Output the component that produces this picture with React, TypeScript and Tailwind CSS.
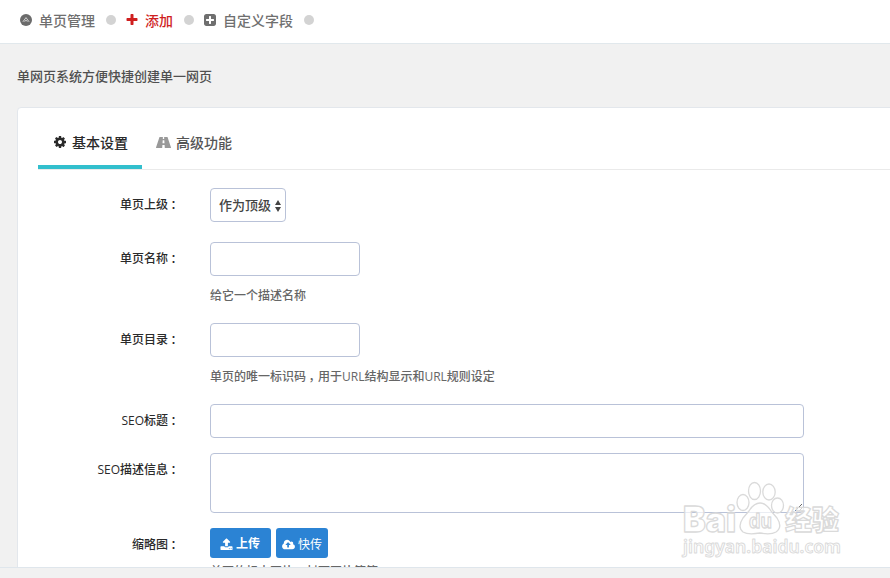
import type { ReactNode } from 'react';

const COG_PATH = 'M1152 896q0-106-75-181t-181-75-181 75-75 181 75 181 181 75 181-75 75-181zm512-109v222q0 12-8 23t-20 13l-185 28q-19 54-39 91 35 50 107 138 10 12 10 25t-9 23q-27 37-99 108t-94 71q-12 0-26-9l-138-108q-44 23-91 38-16 136-29 186-7 28-36 28h-222q-14 0-24.5-8.5t-11.5-21.5l-28-184q-49-16-90-37l-141 107q-10 9-25 9-14 0-25-11-126-114-165-168-7-10-7-23 0-12 8-23 15-21 51-66.5t54-70.5q-27-50-41-99l-183-27q-13-2-21-12.5t-8-23.5v-222q0-12 8-23t19-13l186-28q14-46 39-92-40-57-107-138-10-12-10-24 0-10 9-23 26-36 98.5-107.5t94.5-71.5q13 0 26 10l138 107q44-23 91-38 16-136 29-186 7-28 36-28h222q14 0 24.5 8.5t11.5 21.5l28 184q49 16 90 37l142-107q9-9 24-9 13 0 25 10 129 119 165 170 7 8 7 22 0 12-8 23-15 21-51 66.5t-54 70.5q26 50 41 98l183 28q13 2 21 12.5t8 23.5z';
const PLUS_PATH = 'M1600 736v192q0 40-28 68t-68 28h-416v416q0 40-28 68t-68 28h-192q-40 0-68-28t-28-68v-416h-416q-40 0-68-28t-28-68v-192q0-40 28-68t68-28h416v-416q0-40 28-68t68-28h192q40 0 68 28t28 68v416h416q40 0 68 28t28 68z';
const PLUS_SQUARE_PATH = 'M1408 960v-128q0-26-19-45t-45-19h-320v-320q0-26-19-45t-45-19h-128q-26 0-45 19t-19 45v320h-320q-26 0-45 19t-19 45v128q0 26 19 45t45 19h320v320q0 26 19 45t45 19h128q26 0 45-19t19-45v-320h320q26 0 45-19t19-45zm256-544v960q0 119-84.5 203.5t-203.5 84.5h-960q-119 0-203.5-84.5t-84.5-203.5v-960q0-119 84.5-203.5t203.5-84.5h960q119 0 203.5 84.5t84.5 203.5z';
const UPLOAD_PATH = 'M1344 1472q0-26-19-45t-45-19-45 19-19 45 19 45 45 19 45-19 19-45zm256 0q0-26-19-45t-45-19-45 19-19 45 19 45 45 19 45-19 19-45zm128-224v320q0 40-28 68t-68 28h-1472q-40 0-68-28t-28-68v-320q0-40 28-68t68-28h427q21 56 70.5 92t110.5 36h256q61 0 110.5-36t70.5-92h427q40 0 68 28t28 68zm-325-648q-17 40-59 40h-256v448q0 26-19 45t-45 19h-256q-26 0-45-19t-19-45v-448h-256q-42 0-59-40-17-39 14-69l448-448q18-19 45-19t45 19l448 448q31 30 14 69z';
const CLOUD_PATH = 'M1280 864q0-14-9-23l-352-352q-9-9-23-9t-23 9l-351 351q-10 12-10 24 0 14 9 23t23 9h224v352q0 13 9.5 22.5t22.5 9.5h192q13 0 22.5-9.5t9.5-22.5v-352h224q13 0 22.5-9.5t9.5-22.5zm640 288q0 159-112.5 271.5t-271.5 112.5h-1088q-185 0-316.5-131.5t-131.5-316.5q0-130 70-240t188-165q-2-30-2-43 0-212 150-362t362-150q156 0 285.5 87t188.5 231q71-62 166-62 106 0 181 75t75 181q0 76-41 138 130 31 213.5 135.5t83.5 238.5z';

type IconProps = { d: string; viewBox?: string; className: string };

function Icon({ d, viewBox = '0 0 1792 1792', className }: IconProps) {
  return (
    <svg viewBox={viewBox} className={`shrink-0 ${className}`} fill="currentColor">
      <path d={d} />
    </svg>
  );
}

function Dot() {
  return <i className="size-[10px] shrink-0 rounded-full bg-[#d3d3d3]" />;
}

// half-width glyph centred in a full-width box
function Punct({ children }: { children: ReactNode }) {
  return <span className="inline-block w-3 pr-px text-center leading-4 [font-family:'Noto_Sans_CJK_SC',sans-serif] [font-feature-settings:'halt']">{children}</span>;
}

function TopNav() {
  return (
    <nav className="flex h-11 items-center border-b border-[#e1e8ec] bg-white pb-[3px] pl-5 text-[14px] text-[#6f6f6f]">
      <svg viewBox="0 0 12 12" className="size-3 shrink-0">
        <circle cx="6" cy="6" r="6" fill="#6b6b6b" />
        <path d="M2.9 7.800 6 3.6 9.1 7.800M4.400 7.400Q6 5.400 7.600 7.400" fill="none" stroke="#dedede" strokeWidth="0.9" />
      </svg>
      <span className="mr-[11px] ml-[7px]">单页管理</span>
      <Dot />
      <Icon d={PLUS_PATH} className="ml-[9px] size-[14px] text-[#cf1f1f]" />
      <span className="mr-[11px] ml-[6px] text-[#cf1f1f]">添加</span>
      <Dot />
      <Icon d={PLUS_SQUARE_PATH} className="ml-[9px] size-[14px]" />
      <span className="mr-[11px] ml-[6px]">自定义字段</span>
      <Dot />
    </nav>
  );
}

function Tabs() {
  return (
    <div className="flex h-[62px] border-b border-[#eaeaea]">
      <div className="flex w-[104px] items-center border-b-4 border-[#32bfcd] pb-[3px] pl-[15px] pt-[14px] text-[14px] text-[#2a2a2a]">
        <Icon d={COG_PATH} className="size-[14px]" />
        <span className="ml-[5px]">基本设置</span>
      </div>
      <div className="flex items-center pb-[6px] pl-[14px] pt-[14px] text-[14px] text-[#555]">
        <svg viewBox="0 0 15 11" className="h-[11px] w-[15px] fill-[#999]">
          <path fillRule="evenodd" d="M3.5 0H6.900L6.800 2H8.200L8.100 0H11.500L15 10.500Q15 11 14.500 11H8.800L8.600 8H6.400L6.200 11H.5Q0 11 0 10.500ZM6.700 3.200 6.500 6.300H8.500L8.300 3.200Z" />
        </svg>
        <span className="ml-[5px]">高级功能</span>
      </div>
    </div>
  );
}

function Row({ label, className = '', children }: { label: string; className?: string; children: ReactNode }) {
  return (
    <div className={`flex items-start ${className}`}>
      <label className="w-[142px] pt-[7px] text-right text-[12px] leading-5 text-[#2a2a2a]">
        {label}
        <Punct>：</Punct>
      </label>
      <div className="ml-[30px]">{children}</div>
    </div>
  );
}

function Help({ className = 'mt-[10px]', children }: { className?: string; children: ReactNode }) {
  return <p className={`h-5 text-[12px] leading-5 whitespace-nowrap text-[#666] ${className}`}>{children}</p>;
}

const field = 'block rounded-[4px] border border-[#b9c2d8] bg-white outline-none';

function PageForm() {
  return (
    <form className="pt-[18px]">
      <Row label="单页上级" className="h-[54px]">
        <button type="button" className={`${field} flex h-[34px] w-[76px] items-center pt-px pl-2 text-[13px] text-[#444]`}>
          作为顶级
          <svg viewBox="0 0 6 12" className="ml-[4px] h-3 w-[6px] fill-[#444]">
            <path d="M3 0 6 5H0ZM0 7H6L3 12Z" />
          </svg>
        </button>
      </Row>
      <Row label="单页名称" className="h-[81px]">
        <input className={`${field} h-[34px] w-[150px]`} />
        <Help>给它一个描述名称</Help>
      </Row>
      <Row label="单页目录" className="h-[81px]">
        <input className={`${field} h-[34px] w-[150px]`} />
        <Help>
          单页的唯一标识码<Punct>，</Punct>用于URL结构显示和URL规则设定
        </Help>
      </Row>
      <Row label="SEO标题" className="h-[49px]">
        <input className={`${field} h-[34px] w-[594px]`} />
      </Row>
      <Row label="SEO描述信息" className="h-[75px]">
        <textarea className={`${field} h-[60px] w-[594px] resize`} />
      </Row>
      <Row label="缩略图">
        <div className="flex gap-[5px] text-[12px] text-white">
          <button type="button" className="flex h-[30px] w-[61px] items-center rounded-[3px] bg-[#2b83d4] pt-[2px] pl-[10px] font-bold">
            <Icon d={UPLOAD_PATH} className="mr-[3px] size-[13px]" />
            上传
          </button>
          <button type="button" className="flex h-[30px] w-[52px] items-center rounded-[3px] bg-[#2b83d4] pt-[3px] pl-[6px] font-normal">
            <Icon d={CLOUD_PATH} viewBox="0 0 1920 1792" className="mr-[3px] h-[12px] w-[13px]" />
            快传
          </button>
        </div>
        <Help className="mt-[4px]">
          单页的标志图片<Punct>，</Punct>封面图片等等
        </Help>
      </Row>
    </form>
  );
}

function Watermark() {
  return (
    <svg viewBox="0 0 165 84" className="pointer-events-none absolute top-[479px] left-[680px] h-[84px] w-[165px]">
      <g fill="#fff" fillOpacity="0.7" stroke="#dadada" strokeWidth="1.300" strokeLinejoin="round">
        <text x="3" y="53" fontSize="35" fontWeight="900" textLength="53" lengthAdjust="spacingAndGlyphs" className="[font-family:Inter,sans-serif]">Bai</text>
        <text x="105" y="51" fontSize="27" fontWeight="900" textLength="54">经验</text>
        <text x="3" y="74" fontSize="17" fontWeight="600" strokeWidth="0.900" textLength="158" lengthAdjust="spacingAndGlyphs" className="[font-family:'Noto_Sans',sans-serif]">jingyan.baidu.com</text>
        <ellipse cx="63" cy="23.500" rx="6" ry="8" />
        <ellipse cx="74.500" cy="12" rx="6" ry="8.500" />
        <ellipse cx="89" cy="13" rx="6.200" ry="8" />
        <ellipse cx="97.500" cy="26.500" rx="6" ry="7.500" />
        <path d="M80 24Q86 24 91 32L97 39Q103 48 96 53Q91 56 80 54Q68 56 63 53Q57 48 63 39L69 32Q74 24 80 24Z" />
        <text x="69" y="49" fontSize="21" fontWeight="bold" textLength="23" lengthAdjust="spacingAndGlyphs" className="[font-family:'Liberation_Sans',sans-serif]">du</text>
      </g>
    </svg>
  );
}

export default function App() {
  return (
    <div className="relative flex h-[578px] w-[890px] flex-col overflow-hidden bg-[#f1f1f1] font-medium [font-family:'Open_Sans','Noto_Sans_CJK_SC',sans-serif]">
      <TopNav />
      <main className="h-[523px] overflow-hidden">
        <p className="h-[63px] pt-[22px] pl-[17px] text-[13px] leading-5 text-[#505050]">单网页系统方便快捷创建单一网页</p>
        <section className="ml-[17px] h-[500px] w-[900px] rounded-[4px] border border-[#e3e7ec] bg-white pl-5">
          <Tabs />
          <PageForm />
        </section>
      </main>
      <footer className="grow border-t border-[#dfe6ec] bg-[#f1f1f1]" />
      <Watermark />
    </div>
  );
}
